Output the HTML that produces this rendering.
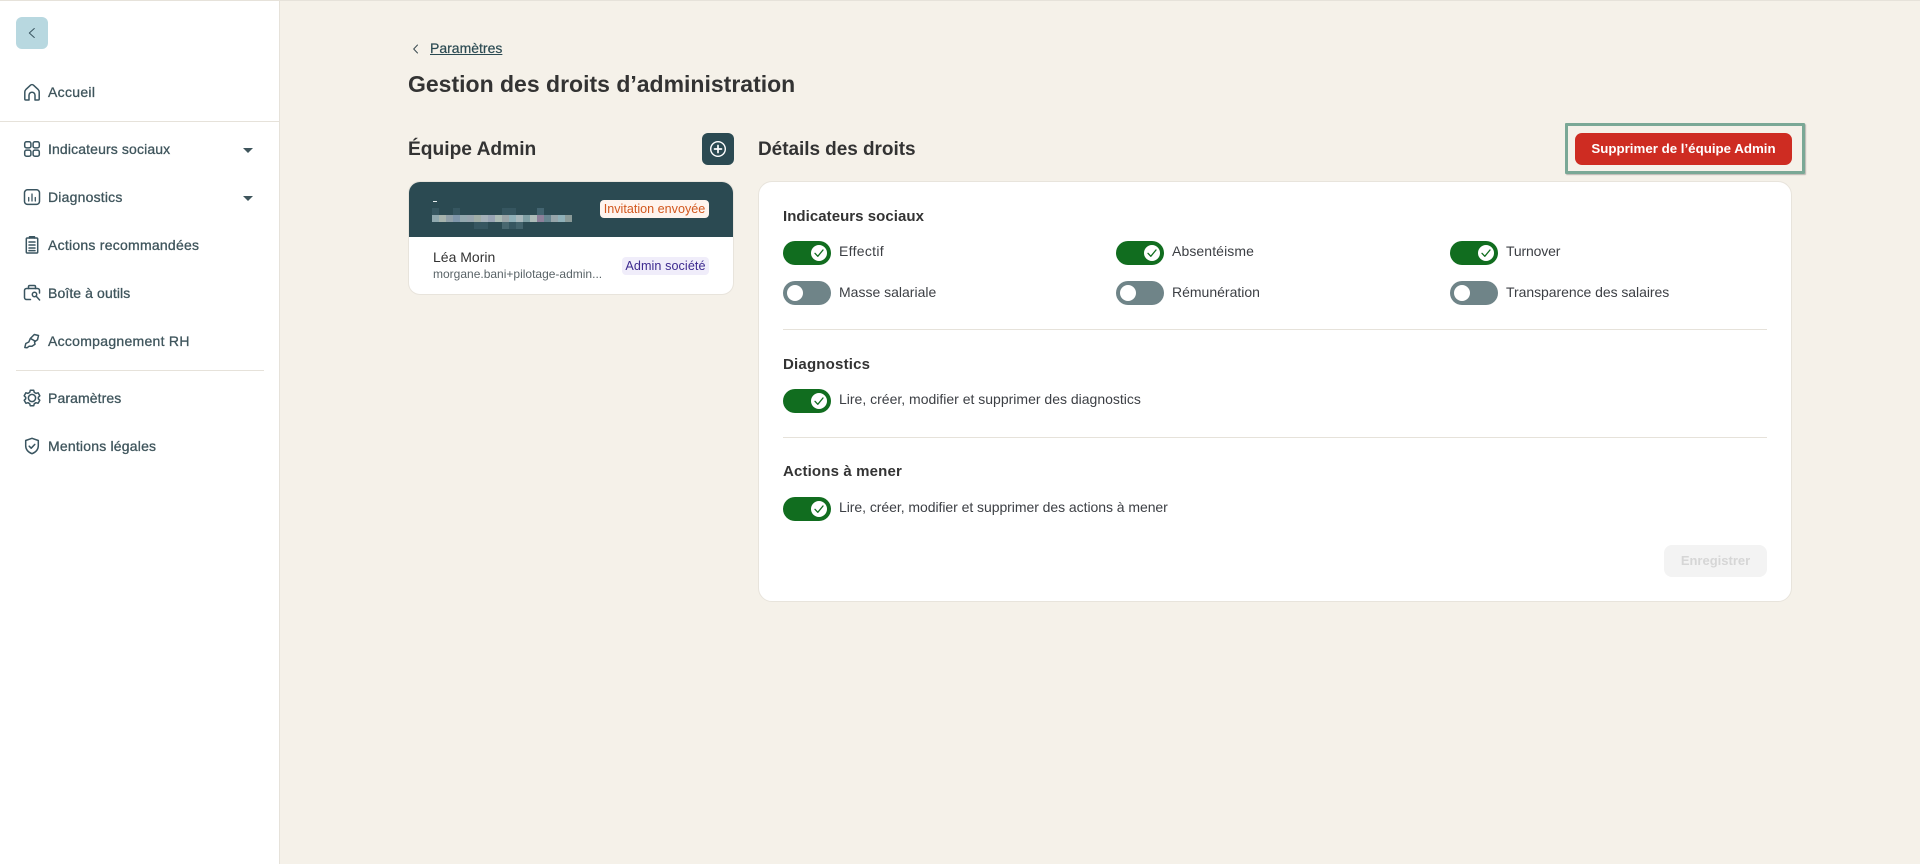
<!DOCTYPE html>
<html lang="fr"><head><meta charset="utf-8"><title>Gestion des droits d'administration</title>
<style>
*{box-sizing:border-box}
html,body{margin:0;padding:0;width:1920px;height:864px;overflow:hidden;background:#f5f1e9;font-family:"Liberation Sans",sans-serif;color:#333}
.a{position:absolute;white-space:nowrap}
#top{left:0;top:0;width:1920px;height:1px;background:#e6e2da}
#side{left:0;top:0;width:280px;height:864px;background:#fff;border-right:1px solid #e6e2da;border-top:1px solid #e6e2da}
.nav{left:48px;font-size:14px;line-height:20px;letter-spacing:.2px;color:#3f555c;-webkit-text-stroke:.3px #3f555c}
.ic{position:absolute;left:20px;width:24px;height:24px;fill:none;stroke:#3a5560;stroke-width:1.5;stroke-linecap:round;stroke-linejoin:round}
.div{height:1px;background:#e6e2da}
.car{left:243px;width:0;height:0;border-left:5px solid transparent;border-right:5px solid transparent;border-top:5px solid #3f555c}
.h3{font-size:15px;line-height:20px;font-weight:700;color:#333;left:783px;letter-spacing:.05px}
.lbl{font-size:14px;line-height:20px;color:#3c3f44}
.tg{position:absolute;width:48px;height:24px;border-radius:12px}
.on{background:#116d1f}.off{background:#6f8488}
.tg i{position:absolute;top:4px;width:16px;height:16px;border-radius:50%;background:#fff}
.off i{left:4px}.on i{left:28px}
.tg svg{position:absolute;left:28px;top:4px;width:16px;height:16px;fill:none;stroke:#116d1f;stroke-width:1.3;stroke-linecap:round;stroke-linejoin:round}
.badge{font-size:12.6px;line-height:18px;height:18px;border-radius:4px;text-align:center}
</style></head><body>
<div class="a" id="side"></div>
<div class="a" id="top"></div>
<div class="a" style="left:16px;top:17px;width:32px;height:32px;border-radius:6px;background:#b8d8e0"></div>
<svg class="a" style="left:26px;top:27px" width="12" height="12" viewBox="0 0 12 12" fill="none" stroke="#3a5560" stroke-width="1" stroke-linecap="round" stroke-linejoin="round"><path d="M8.300 1.500 3.300 6l5 4.500"/></svg>

<svg class="ic" style="top:80px" viewBox="0 0 24 24"><path d="M4.800 12c0-1 .4-1.800 1-2.400L10.500 5.200a2.200 2.200 0 0 1 3 0L18.200 9.600c.6.6 1 1.400 1 2.400v7a1 1 0 0 1-1 1H15v-4.800a3 3 0 0 0-6 0V20H5.800a1 1 0 0 1-1-1z"/></svg>
<div class="a nav" style="top:82px;letter-spacing:.3px">Accueil</div>
<div class="a div" style="left:0;top:121px;width:279px"></div>

<svg class="ic" style="top:137px" viewBox="0 0 24 24"><rect x="4.700" y="4.700" width="6.200" height="6.200" rx="1.800"/><rect x="13.100" y="4.700" width="6.200" height="6.200" rx="1.800"/><rect x="4.700" y="13.100" width="6.200" height="6.200" rx="1.800"/><rect x="13.100" y="13.100" width="6.200" height="6.200" rx="1.800"/></svg>
<div class="a nav" style="top:139px;letter-spacing:.13px">Indicateurs sociaux</div>
<div class="a car" style="top:148px"></div>

<svg class="ic" style="top:185px" viewBox="0 0 24 24"><rect x="4.500" y="4.800" width="15" height="14.600" rx="3"/><path d="M8.700 12.500v3.500M12 9v7M15.300 12.500v3.500" stroke-width="1.300"/></svg>
<div class="a nav" style="top:187px">Diagnostics</div>
<div class="a car" style="top:196px"></div>

<svg class="ic" style="top:233px" viewBox="0 0 24 24" stroke-width="1.300"><rect x="6.300" y="5" width="11.400" height="15" rx="1"/><path d="M9.500 5V3.800h5V5M9 9h6M9 12h6M9 15h6M9 17.600h6"/></svg>
<div class="a nav" style="top:235px;letter-spacing:.25px">Actions recommandées</div>

<svg class="ic" style="top:281px" viewBox="0 0 24 24" stroke-width="1.400"><path d="M10.500 18.500H6.500a2 2 0 0 1-2-2v-7a2 2 0 0 1 2-2h11a2 2 0 0 1 2 2v2.500"/><path d="M8.500 7.500V5.800A1.300 1.300 0 0 1 9.800 4.500h4.400a1.300 1.300 0 0 1 1.300 1.300v1.700"/><circle cx="14.500" cy="13.500" r="2.200"/><path d="M16 15l3.600 4"/></svg>
<div class="a nav" style="top:283px;letter-spacing:.1px">Boîte à outils</div>

<svg class="ic" style="top:329px" viewBox="0 0 24 24" stroke-width="1.400"><path d="M4.800 18.500l1-4 3-1.500 1.500-3.500 4-4 4.200 1-1 4.300-3 2 .5 2.500-3 2h-3l-2 1.500z"/><path d="M10.500 9.500l5 2.800"/></svg>
<div class="a nav" style="top:331px;letter-spacing:.28px">Accompagnement RH</div>
<div class="a div" style="left:16px;top:370px;width:248px"></div>

<svg class="ic" style="top:386px" viewBox="0 0 24 24" stroke-width="1.400"><circle cx="12" cy="12" r="3.600"/><path d="M10.300 4.300h3.400l.6 2.100 1.700 1 2.100-.6 1.700 3-1.500 1.500v1.500l1.500 1.500-1.700 3-2.100-.6-1.700 1-.6 2.100h-3.400l-.6-2.100-1.700-1-2.100.6-1.700-3 1.500-1.500v-1.500l-1.500-1.500 1.700-3 2.100.6 1.700-1z"/></svg>
<div class="a nav" style="top:388px;letter-spacing:.1px">Paramètres</div>

<svg class="ic" style="top:434px" viewBox="0 0 24 24" stroke-width="1.400"><path d="M12 4.300 5.700 6.500v5.200c0 3.800 2.700 6.500 6.300 8 3.600-1.500 6.300-4.200 6.300-8V6.500z"/><path d="M9.200 12.200l2 2 3.600-3.800"/></svg>
<div class="a nav" style="top:436px">Mentions légales</div>

<svg class="a" style="left:410px;top:43px" width="12" height="12" viewBox="0 0 12 12" fill="none" stroke="#3a4a50" stroke-width="1" stroke-linecap="round" stroke-linejoin="round"><path d="M7.500 2 3.700 6l3.800 4"/></svg>
<div class="a" style="left:430px;top:38px;font-size:14px;line-height:20px;color:#2b4a52;text-decoration:underline;-webkit-text-stroke:.2px #2b4a52">Paramètres</div>
<div class="a" style="left:408px;top:69px;font-size:23px;line-height:30px;font-weight:700;color:#333">Gestion des droits d’administration</div>
<div class="a" style="left:408px;top:137px;font-size:19.200px;line-height:26px;font-weight:700;color:#333">Équipe Admin</div>
<div class="a" style="left:702px;top:133px;width:32px;height:32px;border-radius:6px;background:#2b4a52"></div>
<svg class="a" style="left:708px;top:139px" width="20" height="20" viewBox="0 0 20 20" fill="none" stroke="#fff" stroke-width="1.400" stroke-linecap="round"><circle cx="10" cy="10" r="7.300"/><path d="M10 6.500v7M6.500 10h7" stroke-width="1.700"/></svg>

<div class="a" style="left:409px;top:182px;width:324px;height:112px;border-radius:11px;background:#fff;box-shadow:0 0 0 1px #e8e4dc"></div>
<div class="a" style="left:409px;top:182px;width:324px;height:55px;border-radius:11px 11px 0 0;background:#2b4a52"></div>
<div class="a" style="left:433px;top:200.500px;width:4px;height:1.500px;background:#e8eeee"></div>
<svg class="a" style="left:432px;top:208px" width="140" height="21" shape-rendering="crispEdges">
<g fill="#365660"><rect x="0" y="0" width="7" height="7"/><rect x="21" y="0" width="7" height="7"/><rect x="70" y="0" width="14" height="7"/><rect x="105" y="0" width="7" height="7" fill="#436470"/><rect x="42" y="14" width="14" height="7"/><rect x="70" y="14" width="7" height="7" fill="#48676f"/><rect x="77" y="14" width="7" height="7"/><rect x="84" y="14" width="7" height="7" fill="#43636c"/></g>
<rect x="0" y="7" width="7" height="7" fill="#8fa8ae"/><rect x="7" y="7" width="7" height="7" fill="#a6b3ad"/><rect x="14" y="7" width="7" height="7" fill="#8f9fa8"/><rect x="21" y="7" width="7" height="7" fill="#7f96aa"/><rect x="28" y="7" width="7" height="7" fill="#93a8ae"/><rect x="35" y="7" width="7" height="7" fill="#97a5ae"/><rect x="42" y="7" width="7" height="7" fill="#a0ada6"/><rect x="49" y="7" width="7" height="7" fill="#a4b0b8"/><rect x="56" y="7" width="7" height="7" fill="#98a4b4"/><rect x="63" y="7" width="7" height="7" fill="#abbbb5"/><rect x="70" y="7" width="7" height="7" fill="#9aa5a8"/><rect x="77" y="7" width="7" height="7" fill="#8fb0b8"/><rect x="84" y="7" width="7" height="7" fill="#a8b8bc"/><rect x="91" y="7" width="7" height="7" fill="#7f9fa4"/><rect x="98" y="7" width="7" height="7" fill="#adbcb9"/><rect x="105" y="7" width="7" height="7" fill="#8d809a"/><rect x="112" y="7" width="7" height="7" fill="#688590"/><rect x="119" y="7" width="7" height="7" fill="#96a5aa"/><rect x="126" y="7" width="7" height="7" fill="#8fb0b8"/><rect x="133" y="7" width="7" height="7" fill="#8a9a98"/>
</svg>
<div class="a badge" style="left:600px;top:200px;width:109px;background:#fff4ee;color:#d2581f">Invitation envoyée</div>
<div class="a" style="left:433px;top:247px;font-size:14px;line-height:20px;color:#333">Léa Morin</div>
<div class="a" style="left:433px;top:266px;font-size:12px;line-height:17px;color:#5a6468">morgane.bani+pilotage-admin...</div>
<div class="a badge" style="left:622px;top:257px;width:87px;background:#f0edfa;color:#3d2a8f;letter-spacing:.08px">Admin société</div>

<div class="a" style="left:758px;top:137px;font-size:19px;line-height:26px;font-weight:700;color:#333;letter-spacing:-.05px">Détails des droits</div>
<div class="a" style="left:1565px;top:123px;width:240px;height:51px;border:3.300px solid #7aa896;border-radius:1px;box-shadow:1px 1px 1px rgba(0,0,0,.25)"></div>
<div class="a" style="left:1575px;top:133px;width:217px;height:32px;border-radius:7px;background:#ce2c22;color:#fff;font-size:13.300px;font-weight:700;line-height:32px;text-align:center">Supprimer de l’équipe Admin</div>

<div class="a" style="left:758px;top:181px;width:1034px;height:421px;border:1px solid #e8e4dc;border-radius:14px;background:#fff"></div>

<div class="a h3" style="top:207px">Indicateurs sociaux</div>
<div class="tg on" style="left:783px;top:241px"><i></i><svg viewBox="0 0 16 16"><path d="M4 8.300l2.800 3L12 5"/></svg></div><div class="a lbl" style="left:839px;top:241px;letter-spacing:.3px">Effectif</div>
<div class="tg on" style="left:1116px;top:241px"><i></i><svg viewBox="0 0 16 16"><path d="M4 8.300l2.800 3L12 5"/></svg></div><div class="a lbl" style="left:1172px;top:241px;letter-spacing:.1px">Absentéisme</div>
<div class="tg on" style="left:1450px;top:241px"><i></i><svg viewBox="0 0 16 16"><path d="M4 8.300l2.800 3L12 5"/></svg></div><div class="a lbl" style="left:1506px;top:241px;letter-spacing:-.15px">Turnover</div>
<div class="tg off" style="left:783px;top:281px"><i></i></div><div class="a lbl" style="left:839px;top:282px">Masse salariale</div>
<div class="tg off" style="left:1116px;top:281px"><i></i></div><div class="a lbl" style="left:1172px;top:282px">Rémunération</div>
<div class="tg off" style="left:1450px;top:281px"><i></i></div><div class="a lbl" style="left:1506px;top:282px;letter-spacing:-.05px">Transparence des salaires</div>
<div class="a div" style="left:783px;top:329px;width:984px"></div>

<div class="a h3" style="top:355px;letter-spacing:.2px">Diagnostics</div>
<div class="tg on" style="left:783px;top:389px"><i></i><svg viewBox="0 0 16 16"><path d="M4 8.300l2.800 3L12 5"/></svg></div><div class="a lbl" style="left:839px;top:389px">Lire, créer, modifier et supprimer des diagnostics</div>
<div class="a div" style="left:783px;top:437px;width:984px"></div>

<div class="a h3" style="top:462px;letter-spacing:.15px">Actions à mener</div>
<div class="tg on" style="left:783px;top:497px"><i></i><svg viewBox="0 0 16 16"><path d="M4 8.300l2.800 3L12 5"/></svg></div><div class="a lbl" style="left:839px;top:497px;letter-spacing:-.05px">Lire, créer, modifier et supprimer des actions à mener</div>

<div class="a" style="left:1664px;top:545px;width:103px;height:32px;border-radius:8px;background:#f3f3f3;color:#d6d6d6;font-size:13px;font-weight:700;line-height:32px;text-align:center">Enregistrer</div>
</body></html>
